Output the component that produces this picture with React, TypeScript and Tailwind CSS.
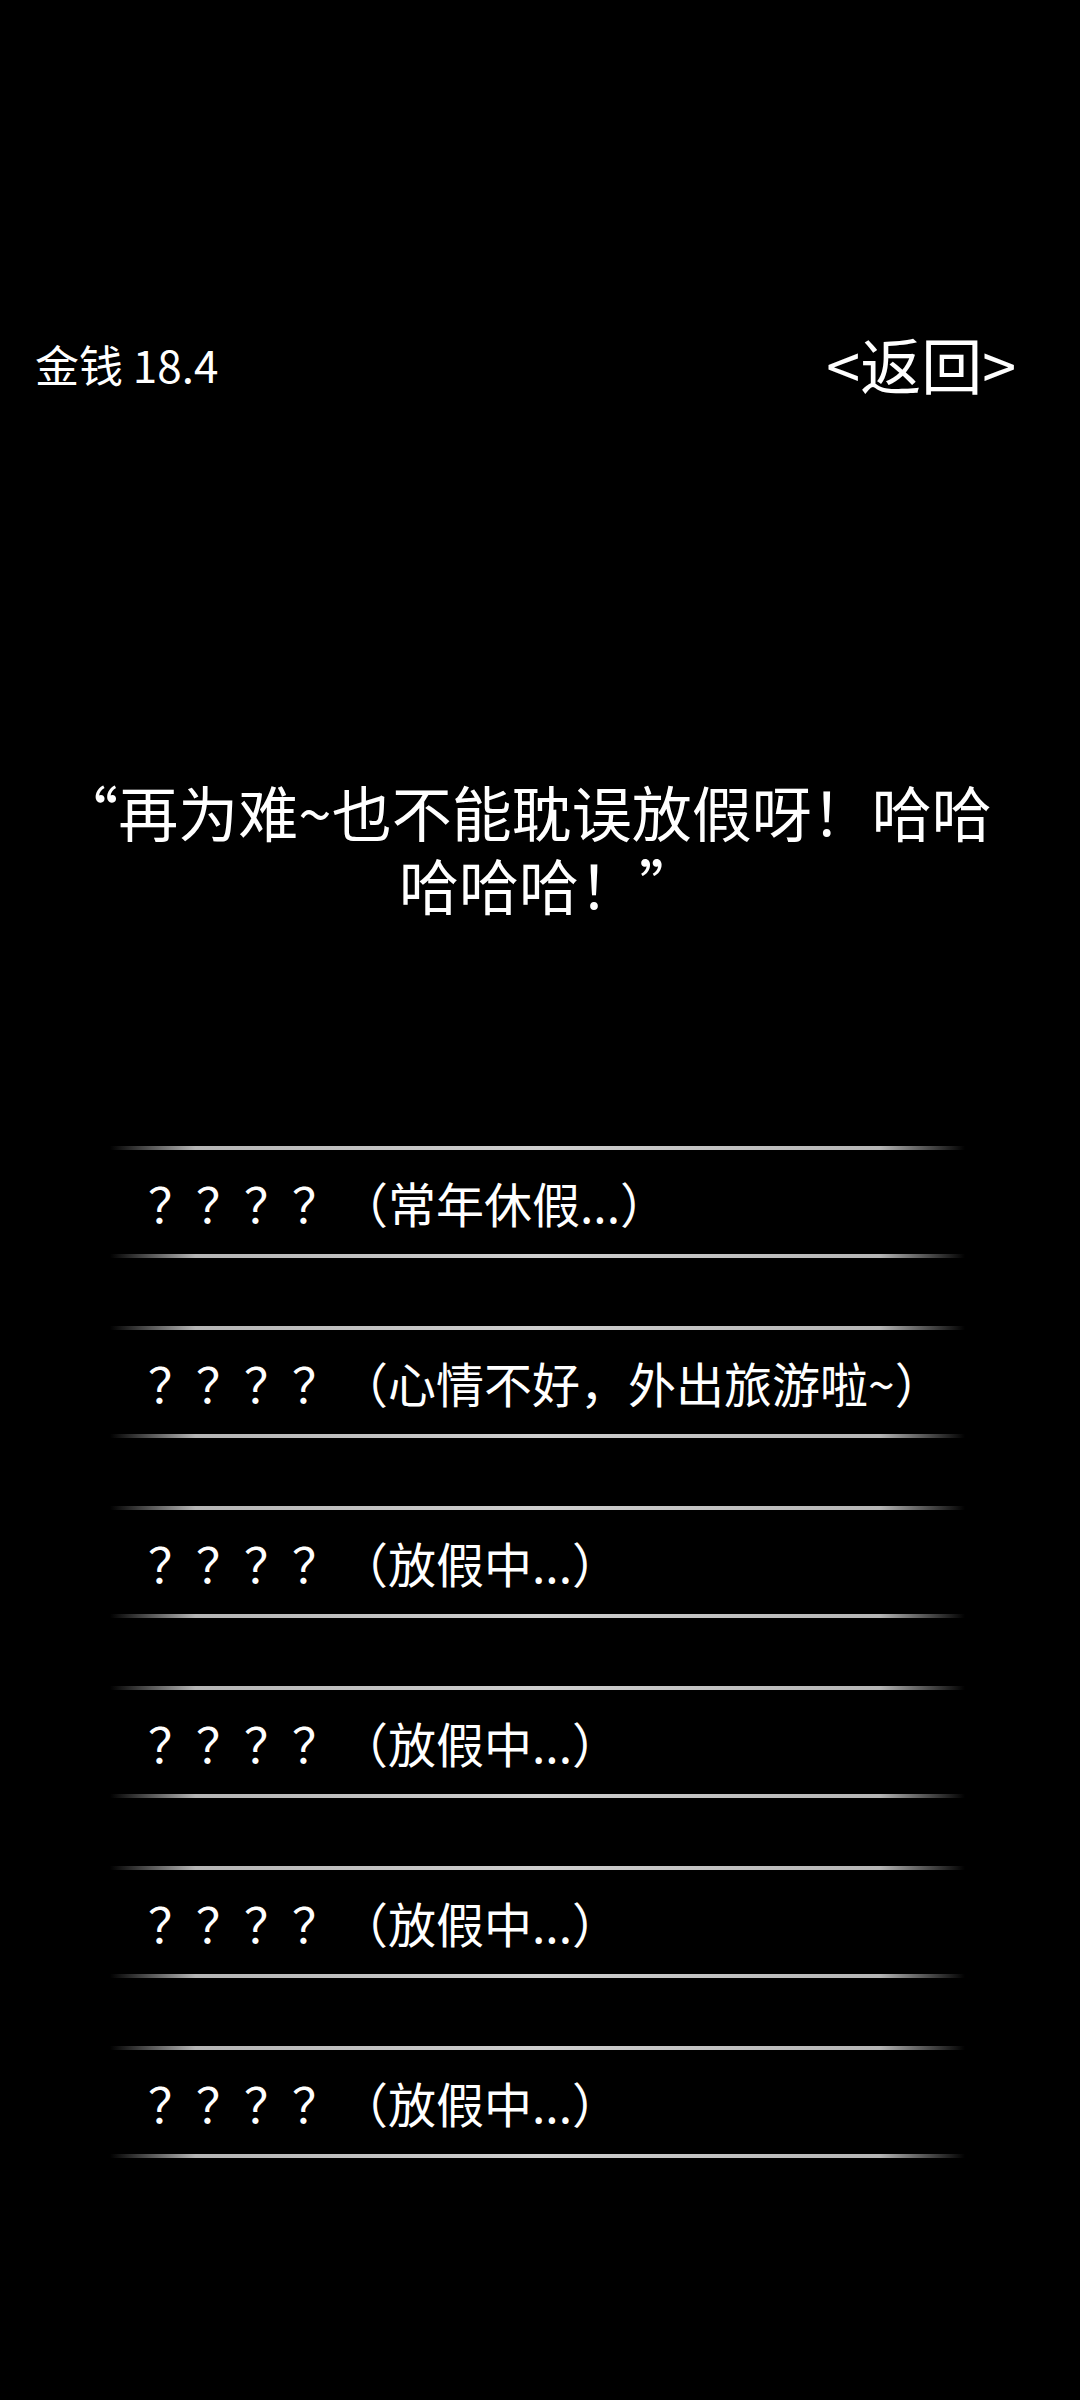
const rows = [
  '？？？？（常年休假...）',
  '？？？？（心情不好，外出旅游啦~）',
  '？？？？（放假中...）',
  '？？？？（放假中...）',
  '？？？？（放假中...）',
  '？？？？（放假中...）',
]

function Divider() {
  return (
    <div className="ml-[110px] w-[855px] h-[4px] bg-[linear-gradient(to_right,transparent,#b5b5b5_10%,#cfcfcf_50%,#b5b5b5_90%,transparent)]" />
  )
}

export default function App() {
  return (
    <div className="min-h-[2400px] bg-black text-white font-['Noto_Sans_CJK_SC',sans-serif]">
      {/* top bar */}
      <div className="pt-[324px] h-[404px] flex items-center justify-between pl-[35px] pr-[64px]">
        <span className="text-[44px] leading-[80px]">金钱 18.4</span>
        <span className="text-[61px] leading-[80px]">&lt;返回&gt;</span>
      </div>

      {/* quote */}
      <div className="mt-[370px] px-[20px] text-center text-[60px] leading-[73px] whitespace-nowrap">
        <p className="pr-[30px]">“再为难~也不能耽误放假呀！哈哈</p>
        <p className="pl-[18px]">哈哈哈！”</p>
      </div>

      {/* list */}
      <div className="mt-[226px] flex flex-col gap-[68px]">
        {rows.map((r, i) => (
          <div key={i} className="flex flex-col">
            <Divider />
            <div className="h-[104px] flex items-center pl-[148px] text-[48px]">{r}</div>
            <Divider />
          </div>
        ))}
      </div>
    </div>
  )
}
